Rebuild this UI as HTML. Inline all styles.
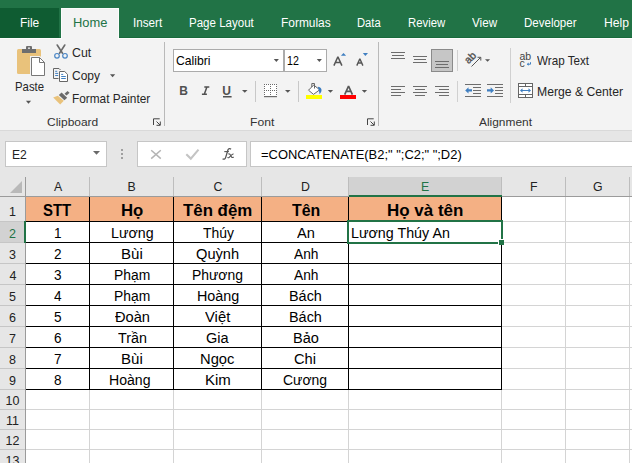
<!DOCTYPE html>
<html><head><meta charset="utf-8">
<style>
*{margin:0;padding:0;box-sizing:border-box}
html,body{width:632px;height:463px;overflow:hidden;background:#fff;font-family:"Liberation Sans",sans-serif;position:relative}
.a{position:absolute}
.t{position:absolute;white-space:pre;line-height:1}
svg{position:absolute;left:0;top:0}
</style></head><body>
<!-- tab bar -->
<div class="a" style="left:0;top:0;width:632px;height:38px;background:#217346"></div>
<div class="a" style="left:0;top:37px;width:632px;height:1px;background:#186a3b"></div>
<div class="a" style="left:0;top:8px;width:59px;height:30px;background:#0f5c32"></div>
<!-- ribbon -->
<div class="a" style="left:0;top:38px;width:632px;height:92px;background:#f3f3f3;border-top:1px solid #fcfcfc"></div>
<div class="a" style="left:61px;top:8px;width:58px;height:31px;background:#f3f3f3;border:1px solid #fcfcfc;border-bottom:none"></div>
<div class="a" style="left:0;top:130px;width:632px;height:1px;background:#d9d9d9"></div>
<div class="a" style="left:0;top:131px;width:632px;height:66px;background:#e6e6e6"></div>
<!-- formula bar boxes -->
<div class="a" style="left:5px;top:141px;width:102px;height:26px;background:#fff;border:1px solid #c6c6c6"></div>
<div class="a" style="left:137px;top:141px;width:110px;height:26px;background:#fff;border:1px solid #c6c6c6"></div>
<div class="a" style="left:250px;top:141px;width:390px;height:26px;background:#fff;border:1px solid #c6c6c6"></div>
<!-- font boxes -->
<div class="a" style="left:173px;top:49px;width:111px;height:23px;background:#fff;border:1px solid #ababab"></div>
<div class="a" style="left:284px;top:49px;width:43px;height:23px;background:#fff;border:1px solid #ababab"></div>
<svg width="632" height="463" viewBox="0 0 632 463">
<g shape-rendering="crispEdges">
  <!-- ribbon separators -->
  <rect x="164" y="42" width="1" height="84" fill="#b9b9b9"/>
  <rect x="378" y="42" width="1" height="84" fill="#b9b9b9"/>
  <rect x="255" y="81" width="1" height="21" fill="#c8c8c8"/>
  <rect x="298" y="81" width="1" height="21" fill="#c8c8c8"/>
  <rect x="457" y="50" width="1" height="21" fill="#d0d0d0"/>
  <rect x="457" y="81" width="1" height="21" fill="#d0d0d0"/>
  <rect x="510" y="48" width="1" height="55" fill="#d0d0d0"/>

  <!-- grid: column header -->
  <rect x="349" y="177" width="152" height="18" fill="#d2d2d2"/>
  <rect x="349" y="195" width="153" height="2" fill="#217346"/>
  <rect x="0" y="196" width="349" height="1" fill="#9b9b9b"/>
  <rect x="502" y="196" width="130" height="1" fill="#9b9b9b"/>
  <g fill="#bdbdbd">
    <rect x="89" y="177" width="1" height="19"/>
    <rect x="173" y="177" width="1" height="19"/>
    <rect x="261" y="177" width="1" height="19"/>
    <rect x="348" y="177" width="1" height="19"/>
    <rect x="501" y="177" width="1" height="18"/>
    <rect x="565" y="177" width="1" height="19"/>
    <rect x="629" y="177" width="1" height="19"/>
  </g>
  <rect x="25" y="177" width="1" height="286" fill="#9b9b9b"/>
  <!-- row header -->
  <rect x="0" y="197" width="25" height="266" fill="#e6e6e6"/>
  <rect x="0" y="222" width="24" height="20" fill="#d2d2d2"/>
  <g fill="#c6c6c6">
    <rect x="0" y="221" width="24" height="1"/>
    <rect x="0" y="242" width="24" height="1"/>
    <rect x="0" y="263" width="25" height="1"/>
    <rect x="0" y="284" width="25" height="1"/>
    <rect x="0" y="305" width="25" height="1"/>
    <rect x="0" y="326" width="25" height="1"/>
    <rect x="0" y="347" width="25" height="1"/>
    <rect x="0" y="368" width="25" height="1"/>
    <rect x="0" y="389" width="25" height="1"/>
    <rect x="0" y="409" width="25" height="1"/>
    <rect x="0" y="429" width="25" height="1"/>
    <rect x="0" y="449" width="25" height="1"/>
  </g>
  <rect x="24" y="221" width="2" height="22" fill="#217346"/>
  <!-- header fill row 1 -->
  <rect x="26" y="197" width="475" height="24" fill="#f4b084"/>

  <!-- gridlines -->
  <g fill="#d4d4d4">
    <rect x="89" y="389" width="1" height="74"/>
    <rect x="173" y="389" width="1" height="74"/>
    <rect x="261" y="389" width="1" height="74"/>
    <rect x="348" y="389" width="1" height="74"/>
    <rect x="501" y="389" width="1" height="74"/>
    <rect x="565" y="197" width="1" height="266"/>
    <rect x="629" y="197" width="1" height="266"/>
    <rect x="502" y="221" width="130" height="1"/>
    <rect x="504" y="242" width="128" height="1"/>
    <rect x="502" y="263" width="130" height="1"/>
    <rect x="502" y="284" width="130" height="1"/>
    <rect x="502" y="305" width="130" height="1"/>
    <rect x="502" y="326" width="130" height="1"/>
    <rect x="502" y="347" width="130" height="1"/>
    <rect x="502" y="368" width="130" height="1"/>
    <rect x="502" y="389" width="130" height="1"/>
    <rect x="26" y="409" width="606" height="1"/>
    <rect x="26" y="429" width="606" height="1"/>
    <rect x="26" y="449" width="606" height="1"/>
  </g>
  <!-- black borders -->
  <g fill="#000">
    <rect x="89" y="197" width="1" height="192"/>
    <rect x="173" y="197" width="1" height="192"/>
    <rect x="261" y="197" width="1" height="192"/>
    <rect x="348" y="197" width="1" height="192"/>
    <rect x="501" y="197" width="1" height="192"/>
    <rect x="26" y="221" width="476" height="1"/>
    <rect x="26" y="242" width="476" height="1"/>
    <rect x="26" y="263" width="476" height="1"/>
    <rect x="26" y="284" width="476" height="1"/>
    <rect x="26" y="305" width="476" height="1"/>
    <rect x="26" y="326" width="476" height="1"/>
    <rect x="26" y="347" width="476" height="1"/>
    <rect x="26" y="368" width="476" height="1"/>
    <rect x="26" y="389" width="476" height="1"/>
  </g>
  <!-- selection -->
  <g fill="#217346">
    <rect x="347" y="220" width="156" height="2"/>
    <rect x="347" y="220" width="2" height="24"/>
    <rect x="501" y="220" width="2" height="19"/>
    <rect x="347" y="242" width="151" height="2"/>
    <rect x="499" y="240" width="5" height="5"/>
  </g>
  <rect x="498" y="239" width="7" height="1" fill="#fff"/>
  <rect x="498" y="239" width="1" height="7" fill="#fff"/>
  <rect x="504" y="239" width="1" height="7" fill="#fff" opacity="0"/>

  <!-- selected alignment button -->
  <rect x="431.5" y="49.5" width="21" height="22" fill="#c6c6c6" stroke="#8a8a8a" stroke-width="1" shape-rendering="auto"/>
</g>

<!-- corner triangle -->
<polygon points="22,181 22,193 10,193" fill="#b9b9b9"/>

<!-- Paste icon -->
<rect x="17" y="49" width="24" height="25" rx="1.5" fill="#e9c27b"/>
<rect x="22" y="49" width="14" height="4" fill="#6e6e6e"/>
<rect x="26" y="46" width="6" height="4" rx="1" fill="#6e6e6e"/>
<circle cx="29" cy="48.2" r="0.9" fill="#f3f3f3"/>
<path d="M30,56 H40 L46,62 V77 H30 Z" fill="#f3f3f3"/>
<path d="M31.5,57.5 H39.5 L44.5,62.5 V75.5 H31.5 Z" fill="#fff" stroke="#777" stroke-width="1"/>
<path d="M39.5,57.5 V62.5 H44.5" fill="none" stroke="#777" stroke-width="1"/>
<path d="M25.9,100.8 h5.2 l-2.6,3 z" fill="#555"/>

<!-- Scissors -->
<path d="M57.2,45 L62.5,53.2 M64.8,45 L59.5,53.2" stroke="#6a6a6a" stroke-width="1.6" stroke-linecap="round"/>
<circle cx="57" cy="55.8" r="2.3" fill="none" stroke="#4a86c5" stroke-width="1.2"/>
<circle cx="65" cy="55.8" r="2.3" fill="none" stroke="#4a86c5" stroke-width="1.2"/>

<!-- Copy -->
<path d="M58.5,78.5 H53.5 V68.5 H59 L60.5,70" fill="none" stroke="#666" stroke-width="1"/>
<path d="M55.2,71.3 h2 M55.2,73.4 h3 M55.2,75.5 h3" stroke="#3f7fc1" stroke-width="1"/>
<path d="M59.5,71.5 H64.7 L67.5,74.3 V81.5 H59.5 Z" fill="#fff" stroke="#666" stroke-width="1"/>
<path d="M61.2,74.4 h2 M61.2,76.5 h4.6 M61.2,78.5 h4.6" stroke="#3f7fc1" stroke-width="1"/>
<path d="M110,74.3 h5.2 l-2.6,2.9 z" fill="#555"/>

<!-- Format painter -->
<polygon points="53.2,97.5 57.8,95.7 63.8,100.7 60.2,104.6" fill="#e9c27b"/>
<polygon points="58.8,95 61.6,92.6 67.2,97.8 64.4,100.2" fill="#6a6a6a"/>
<polygon points="64.5,93.8 67.5,91 69.6,92.8 66.6,95.6" fill="#6a6a6a"/>

<!-- launchers -->
<path d="M153.5,125 V118.8 H159.7 M156.5,121.5 L160,125 M160.3,121.5 V125.3 H156.5" fill="none" stroke="#444" stroke-width="1"/>
<path d="M367.5,125 V118.8 H373.7 M370.5,121.5 L374,125 M374.3,121.5 V125.3 H370.5" fill="none" stroke="#444" stroke-width="1"/>

<!-- font dropdown arrows -->
<path d="M273.8,59 h5.1 l-2.55,2.9 z" fill="#555"/>
<path d="M316.8,59 h5.1 l-2.55,2.9 z" fill="#555"/>

<!-- grow/shrink font -->
<path d="M333.9,65.6 L337.9,56.8 L341.9,65.6 M335.4,62.4 h5" fill="none" stroke="#555" stroke-width="1.5" stroke-linejoin="bevel"/>
<path d="M340.9,55.8 h5.2 l-2.6,-2.9 z" fill="#3f7fc1"/>
<path d="M356.8,65.6 L359.85,58.8 L362.9,65.6 M357.9,63 h3.9" fill="none" stroke="#555" stroke-width="1.4" stroke-linejoin="bevel"/>
<path d="M362.8,53 h5.2 l-2.6,2.9 z" fill="#3f7fc1"/>

<!-- B I U -->
<text x="179.2" y="94.9" font-family="Liberation Sans" font-weight="bold" font-size="12" fill="#505050">B</text>
<path d="M204.3,86.9 h5 M201.9,94.2 h5 M206.9,86.9 L204.3,94.2" fill="none" stroke="#505050" stroke-width="1.5"/>
<text x="222.3" y="94.9" font-family="Liberation Sans" font-weight="bold" font-size="12" fill="#505050">U</text>
<rect x="223" y="96" width="8.6" height="1.5" fill="#505050"/>
<path d="M242,90 h5.5 l-2.75,2.8 z" fill="#555"/>

<!-- border icon -->
<rect x="264" y="84" width="13" height="12" fill="#fff"/>
<g fill="#6a6a6a">
  <path d="M264,84h1v1h-1zM266,84h1v1h-1zM268,84h1v1h-1zM270,84h1v1h-1zM272,84h1v1h-1zM274,84h1v1h-1zM276,84h1v1h-1z"/>
  <path d="M264,90h1v1h-1zM266,90h1v1h-1zM268,90h1v1h-1zM270,90h1v1h-1zM272,90h1v1h-1zM274,90h1v1h-1zM276,90h1v1h-1z"/>
  <path d="M264,86h1v1h-1zM264,88h1v1h-1zM264,92h1v1h-1zM264,94h1v1h-1z"/>
  <path d="M270,86h1v1h-1zM270,88h1v1h-1zM270,92h1v1h-1zM270,94h1v1h-1z"/>
  <path d="M276,86h1v1h-1zM276,88h1v1h-1zM276,92h1v1h-1zM276,94h1v1h-1z"/>
  <rect x="264" y="96" width="13" height="1.2"/>
</g>
<path d="M285,90 h5.5 l-2.75,2.8 z" fill="#555"/>

<!-- fill color -->
<path d="M308.5,90.2 L313.7,85 L319.7,89.8 L313.5,94.4 Z" fill="#fff" stroke="#666" stroke-width="1"/>
<path d="M311.8,87 V83.5 H314.5 V88.5" fill="none" stroke="#666" stroke-width="1"/>
<path d="M317.8,86.8 C321.5,87 323.2,90.5 319.6,94.2 L318.8,90 Z" fill="#3a7bbf"/>
<rect x="306" y="95" width="16" height="4" fill="#ffff00"/>
<path d="M327.8,90 h5.3 l-2.65,2.8 z" fill="#555"/>

<!-- font color -->
<path d="M344.7,94.6 L348.55,86 L352.4,94.6 M346.2,91.4 h4.7" fill="none" stroke="#595959" stroke-width="1.7" stroke-linejoin="bevel"/>
<rect x="340" y="95" width="16" height="4" fill="#ff0000"/>
<path d="M361.8,90 h5.3 l-2.65,2.8 z" fill="#555"/>

<!-- alignment icons -->
<g stroke="#6d6d6d" stroke-width="1">
  <path d="M391,52.5 h14 M392,55.5 h12 M391,58.5 h14"/>
  <path d="M413,56.5 h14 M414,59.5 h12 M413,62.5 h14"/>
  <path d="M435,61.5 h14 M436,64.5 h12 M435,67.5 h14"/>
  <path d="M391,86.5 h14 M391,89.5 h10 M391,92.5 h14 M391,95.5 h10"/>
  <path d="M413,86.5 h14 M415,89.5 h10 M413,92.5 h14 M415,95.5 h10"/>
  <path d="M435,86.5 h14 M439,89.5 h10 M435,92.5 h14 M439,95.5 h10"/>
  <path d="M465,84.5 h16 M473,87.5 h8 M473,90.5 h8 M473,93.5 h8 M465,96.5 h16"/>
  <path d="M487,84.5 h16 M495,87.5 h8 M495,90.5 h8 M495,93.5 h8 M487,96.5 h16"/>
</g>
<path d="M465.2,90.4 L468.5,87.2 V89.3 H472 V91.5 H468.5 V93.6 Z" fill="#3f7fc1"/>
<path d="M494,90.4 L490.7,87.2 V89.3 H487 V91.5 H490.7 V93.6 Z" fill="#3f7fc1"/>

<!-- orientation -->
<text x="0" y="0" font-family="Liberation Sans" font-size="10.5" fill="#505050" stroke="#505050" stroke-width="0.35" transform="translate(468.6,64.3) rotate(-45)">ab</text>
<path d="M471.5,66.5 L480.5,57.5" stroke="#555" stroke-width="1"/>
<path d="M477.5,57.3 H480.8 V60.6" fill="none" stroke="#555" stroke-width="1"/>
<path d="M485,59.2 h5.1 l-2.55,2.6 z" fill="#555"/>

<!-- wrap text -->
<text x="519.5" y="59.7" font-family="Liberation Sans" font-size="10.5" fill="#444">ab</text>
<text x="519.5" y="66.8" font-family="Liberation Sans" font-size="10.5" fill="#444">c</text>
<path d="M530.5,62.2 V64.2 H527.5" fill="none" stroke="#3f7fc1" stroke-width="1"/>
<path d="M526.8,64.2 L528.6,62.6 V65.8 Z" fill="#3f7fc1"/>

<!-- merge & center -->
<g fill="none" stroke="#666" stroke-width="1">
  <rect x="518.5" y="83.5" width="14" height="14" fill="#fff"/>
  <path d="M518.5,86.5 h14 M518.5,94.5 h14 M525.5,83.5 v3 M525.5,94.5 v3"/>
</g>
<path d="M521,90.5 h9" stroke="#3f7fc1" stroke-width="1"/>
<path d="M520,90.5 L522.5,88.3 V92.7 Z M531,90.5 L528.5,88.3 V92.7 Z" fill="#3f7fc1"/>

<!-- formula bar -->
<path d="M93,151 h7 l-3.5,3.8 z" fill="#6a6a6a"/>
<g fill="#a0a0a0">
  <rect x="121" y="149" width="2" height="2"/>
  <rect x="121" y="153" width="2" height="2"/>
  <rect x="121" y="157" width="2" height="2"/>
</g>
<path d="M151.2,150.2 L160.8,158.6 M160.8,150.2 L151.2,158.6" stroke="#b4b4b4" stroke-width="1.5"/>
<path d="M186.3,154.3 L190.8,158.6 L198.5,149.6" fill="none" stroke="#c4c4c4" stroke-width="2.1"/>
<path d="M231,149.2 C230,148.3 228.6,148.5 228,149.8 L225.6,157.6 C225.1,159.2 223.8,159.6 222.6,158.8" fill="none" stroke="#555" stroke-width="1.3"/>
<path d="M224.3,151.6 h4.6" stroke="#555" stroke-width="1.1"/>
<path d="M228.3,154 C229.5,153.6 230.2,154.2 230.8,155.6 L231.6,157.2 C232.2,157.8 233,157.6 233.6,157 M233.6,154 C232.6,153.8 231.6,154.8 230.6,156 L229,157.6 C228.4,158 227.8,157.6 227.6,157.2" fill="none" stroke="#555" stroke-width="1.1"/>
</svg>

<div class='t' style='left:19.63px;top:17px;font-size:12.3px;color:#ffffff;transform:scaleX(0.9722);transform-origin:0 0;'>File</div>
<div class='t' style='left:72.70px;top:17px;font-size:12.3px;color:#217346;transform:scaleX(1.0484);transform-origin:0 0;'>Home</div>
<div class='t' style='left:132.65px;top:17px;font-size:12.3px;color:#ffffff;transform:scaleX(0.9467);transform-origin:0 0;'>Insert</div>
<div class='t' style='left:189.06px;top:17px;font-size:12.3px;color:#ffffff;transform:scaleX(0.9375);transform-origin:0 0;'>Page Layout</div>
<div class='t' style='left:280.53px;top:17px;font-size:12.3px;color:#ffffff;transform:scaleX(0.9700);transform-origin:0 0;'>Formulas</div>
<div class='t' style='left:356.84px;top:17px;font-size:12.3px;color:#ffffff;transform:scaleX(0.9140);transform-origin:0 0;'>Data</div>
<div class='t' style='left:407.83px;top:17px;font-size:12.3px;color:#ffffff;transform:scaleX(0.9231);transform-origin:0 0;'>Review</div>
<div class='t' style='left:472.25px;top:17px;font-size:12.3px;color:#ffffff;transform:scaleX(0.9481);transform-origin:0 0;'>View</div>
<div class='t' style='left:524.06px;top:17px;font-size:12.3px;color:#ffffff;transform:scaleX(0.9364);transform-origin:0 0;'>Developer</div>
<div class='t' style='left:603.91px;top:17px;font-size:12.3px;color:#ffffff;transform:scaleX(0.9875);transform-origin:0 0;'>Help</div>
<div class='t' style='left:14.71px;top:81px;font-size:12.8px;color:#262626;transform:scaleX(0.8871);transform-origin:0 0;'>Paste</div>
<div class='t' style='left:71.64px;top:47px;font-size:12.8px;color:#262626;transform:scaleX(0.9632);transform-origin:0 0;'>Cut</div>
<div class='t' style='left:72.06px;top:70px;font-size:12.8px;color:#262626;transform:scaleX(0.9379);transform-origin:0 0;'>Copy</div>
<div class='t' style='left:72.08px;top:93px;font-size:12.8px;color:#262626;transform:scaleX(0.9247);transform-origin:0 0;'>Format Painter</div>
<div class='t' style='left:47.46px;top:117px;font-size:11.5px;color:#333;transform:scaleX(1.0417);transform-origin:0 0;'>Clipboard</div>
<div class='t' style='left:250.44px;top:117px;font-size:11.5px;color:#333;transform:scaleX(1.0568);transform-origin:0 0;'>Font</div>
<div class='t' style='left:478.90px;top:117px;font-size:11.5px;color:#333;transform:scaleX(1.0353);transform-origin:0 0;'>Alignment</div>
<div class='t' style='left:175.55px;top:55px;font-size:12.8px;color:#000;transform:scaleX(0.9500);transform-origin:0 0;'>Calibri</div>
<div class='t' style='left:287.21px;top:55px;font-size:12px;color:#000;transform:scaleX(0.8875);transform-origin:0 0;'>12</div>
<div class='t' style='left:537.00px;top:55px;font-size:12.8px;color:#262626;transform:scaleX(0.9105);transform-origin:0 0;'>Wrap Text</div>
<div class='t' style='left:536.55px;top:86px;font-size:12.8px;color:#262626;transform:scaleX(0.9517);transform-origin:0 0;'>Merge &amp; Center</div>
<div class='t' style='left:11.80px;top:149px;font-size:12.8px;color:#222;transform:scaleX(0.9464);transform-origin:0 0;'>E2</div>
<div class='t' style='left:261.24px;top:149px;font-size:12.8px;color:#000;transform:scaleX(1.0102);transform-origin:0 0;'>=CONCATENATE(B2;&quot; &quot;;C2;&quot; &quot;;D2)</div>
<div class='t' style='left:54.00px;top:181px;font-size:12.3px;color:#222;'>A</div>
<div class='t' style='left:127.50px;top:181px;font-size:12.3px;color:#222;'>B</div>
<div class='t' style='left:213.50px;top:181px;font-size:12.3px;color:#222;'>C</div>
<div class='t' style='left:301.00px;top:181px;font-size:12.3px;color:#222;'>D</div>
<div class='t' style='left:421.00px;top:181px;font-size:12.3px;color:#217346;'>E</div>
<div class='t' style='left:530.00px;top:181px;font-size:12.3px;color:#222;'>F</div>
<div class='t' style='left:593.00px;top:181px;font-size:12.3px;color:#222;'>G</div>
<div class='t' style='left:9.00px;top:206px;font-size:12.5px;color:#222;'>1</div>
<div class='t' style='left:9.00px;top:228px;font-size:12.5px;color:#217346;'>2</div>
<div class='t' style='left:9.00px;top:249px;font-size:12.5px;color:#222;'>3</div>
<div class='t' style='left:9.50px;top:270px;font-size:12.5px;color:#222;'>4</div>
<div class='t' style='left:9.00px;top:291px;font-size:12.5px;color:#222;'>5</div>
<div class='t' style='left:9.00px;top:312px;font-size:12.5px;color:#222;'>6</div>
<div class='t' style='left:9.00px;top:333px;font-size:12.5px;color:#222;'>7</div>
<div class='t' style='left:9.00px;top:354px;font-size:12.5px;color:#222;'>8</div>
<div class='t' style='left:9.00px;top:375px;font-size:12.5px;color:#222;'>9</div>
<div class='t' style='left:5.50px;top:395px;font-size:12.5px;color:#222;'>10</div>
<div class='t' style='left:6.00px;top:415px;font-size:12.5px;color:#222;'>11</div>
<div class='t' style='left:5.50px;top:435px;font-size:12.5px;color:#222;'>12</div>
<div class='t' style='left:5.50px;top:455px;font-size:12.5px;color:#222;'>13</div>
<div class='t' style='left:43.17px;top:203px;font-size:16px;color:#000;font-weight:bold;transform:scaleX(0.9310);transform-origin:0 0;'>STT</div>
<div class='t' style='left:120.75px;top:203px;font-size:16px;color:#000;font-weight:bold;transform:scaleX(1.0450);transform-origin:0 0;'>Họ</div>
<div class='t' style='left:183.10px;top:203px;font-size:16px;color:#000;font-weight:bold;transform:scaleX(1.0523);transform-origin:0 0;'>Tên đệm</div>
<div class='t' style='left:291.50px;top:203px;font-size:16px;color:#000;font-weight:bold;transform:scaleX(0.9929);transform-origin:0 0;'>Tên</div>
<div class='t' style='left:387.44px;top:203px;font-size:16px;color:#000;font-weight:bold;transform:scaleX(1.0600);transform-origin:0 0;'>Họ và tên</div>
<div class='t' style='left:54.12px;top:226px;font-size:14px;color:#000;transform:scaleX(0.9700);transform-origin:0 0;'>1</div>
<div class='t' style='left:110.78px;top:226px;font-size:14px;color:#000;transform:scaleX(1.0150);transform-origin:0 0;'>Lương</div>
<div class='t' style='left:202.50px;top:226px;font-size:14px;color:#000;transform:scaleX(0.9935);transform-origin:0 0;'>Thúy</div>
<div class='t' style='left:297.20px;top:226px;font-size:14px;color:#000;transform:scaleX(1.0437);transform-origin:0 0;'>An</div>
<div class='t' style='left:54.12px;top:247px;font-size:14px;color:#000;transform:scaleX(0.9700);transform-origin:0 0;'>2</div>
<div class='t' style='left:120.83px;top:247px;font-size:14px;color:#000;transform:scaleX(1.0750);transform-origin:0 0;'>Bùi</div>
<div class='t' style='left:195.96px;top:247px;font-size:14px;color:#000;transform:scaleX(1.0450);transform-origin:0 0;'>Quỳnh</div>
<div class='t' style='left:293.60px;top:247px;font-size:14px;color:#000;transform:scaleX(0.9833);transform-origin:0 0;'>Anh</div>
<div class='t' style='left:54.12px;top:268px;font-size:14px;color:#000;transform:scaleX(0.9700);transform-origin:0 0;'>3</div>
<div class='t' style='left:113.76px;top:268px;font-size:14px;color:#000;transform:scaleX(0.9900);transform-origin:0 0;'>Phạm</div>
<div class='t' style='left:191.71px;top:268px;font-size:14px;color:#000;transform:scaleX(0.9940);transform-origin:0 0;'>Phương</div>
<div class='t' style='left:293.60px;top:268px;font-size:14px;color:#000;transform:scaleX(0.9833);transform-origin:0 0;'>Anh</div>
<div class='t' style='left:54.12px;top:289px;font-size:14px;color:#000;transform:scaleX(0.9700);transform-origin:0 0;'>4</div>
<div class='t' style='left:113.76px;top:289px;font-size:14px;color:#000;transform:scaleX(0.9900);transform-origin:0 0;'>Phạm</div>
<div class='t' style='left:196.78px;top:289px;font-size:14px;color:#000;transform:scaleX(1.0250);transform-origin:0 0;'>Hoàng</div>
<div class='t' style='left:288.87px;top:289px;font-size:14px;color:#000;transform:scaleX(1.0300);transform-origin:0 0;'>Bách</div>
<div class='t' style='left:54.12px;top:310px;font-size:14px;color:#000;transform:scaleX(0.9700);transform-origin:0 0;'>5</div>
<div class='t' style='left:115.40px;top:310px;font-size:14px;color:#000;transform:scaleX(1.0455);transform-origin:0 0;'>Đoàn</div>
<div class='t' style='left:205.40px;top:310px;font-size:14px;color:#000;transform:scaleX(1.0583);transform-origin:0 0;'>Việt</div>
<div class='t' style='left:288.87px;top:310px;font-size:14px;color:#000;transform:scaleX(1.0300);transform-origin:0 0;'>Bách</div>
<div class='t' style='left:54.12px;top:331px;font-size:14px;color:#000;transform:scaleX(0.9700);transform-origin:0 0;'>6</div>
<div class='t' style='left:117.60px;top:331px;font-size:14px;color:#000;transform:scaleX(1.0214);transform-origin:0 0;'>Trần</div>
<div class='t' style='left:206.16px;top:331px;font-size:14px;color:#000;transform:scaleX(1.0381);transform-origin:0 0;'>Gia</div>
<div class='t' style='left:292.56px;top:331px;font-size:14px;color:#000;transform:scaleX(1.0391);transform-origin:0 0;'>Bảo</div>
<div class='t' style='left:54.12px;top:352px;font-size:14px;color:#000;transform:scaleX(0.9700);transform-origin:0 0;'>7</div>
<div class='t' style='left:120.83px;top:352px;font-size:14px;color:#000;transform:scaleX(1.0750);transform-origin:0 0;'>Bùi</div>
<div class='t' style='left:200.35px;top:352px;font-size:14px;color:#000;transform:scaleX(1.0516);transform-origin:0 0;'>Ngọc</div>
<div class='t' style='left:294.35px;top:352px;font-size:14px;color:#000;transform:scaleX(1.0474);transform-origin:0 0;'>Chi</div>
<div class='t' style='left:54.12px;top:373px;font-size:14px;color:#000;transform:scaleX(0.9700);transform-origin:0 0;'>8</div>
<div class='t' style='left:108.74px;top:373px;font-size:14px;color:#000;transform:scaleX(1.0063);transform-origin:0 0;'>Hoàng</div>
<div class='t' style='left:205.03px;top:373px;font-size:14px;color:#000;transform:scaleX(1.0727);transform-origin:0 0;'>Kim</div>
<div class='t' style='left:282.80px;top:373px;font-size:14px;color:#000;transform:scaleX(0.9953);transform-origin:0 0;'>Cương</div>
<div class='t' style='left:350.58px;top:226px;font-size:14px;color:#000;transform:scaleX(1.0200);transform-origin:0 0;'>Lương Thúy An</div>
</body></html>
